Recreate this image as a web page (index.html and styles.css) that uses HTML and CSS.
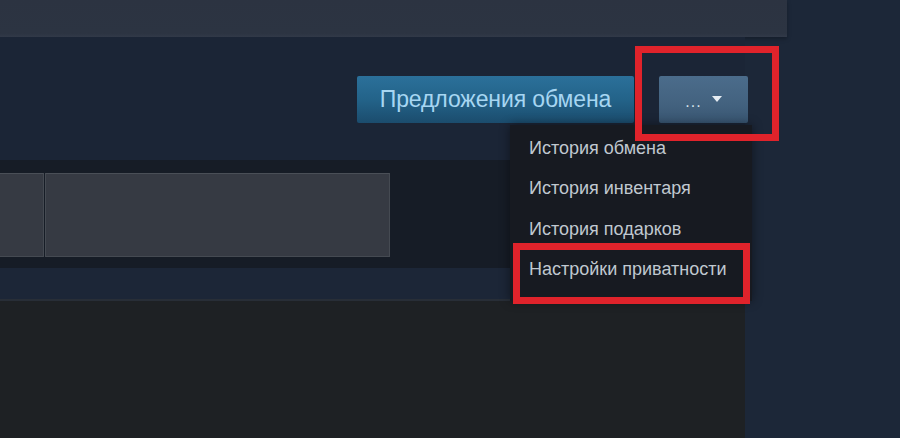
FILE: index.html
```html
<!DOCTYPE html>
<html lang="ru">
<head>
    <meta charset="UTF-8">
    <meta name="viewport" content="width=device-width, initial-scale=1.0">
    <title>Инвентарь</title>
    <link rel="stylesheet" href="styles.css">
</head>
<body>

    <div class="page">
        <div class="main">
            <!-- Top band -->
            <div class="top-band"></div>

            <div class="content">
                <!-- Toolbar with trade buttons -->
                <div class="toolbar">
                    <a class="btn btn-blue" href="#">Предложения обмена</a>
                    <a class="btn btn-grey" href="#">
                        <span class="dots">...</span>
                        <span class="caret"></span>
                    </a>

                    <!-- Dropdown menu -->
                    <div class="menu">
                        <a class="menu-item" href="#">История обмена</a>
                        <a class="menu-item" href="#">История инвентаря</a>
                        <a class="menu-item" href="#">История подарков</a>
                        <a class="menu-item" href="#">Настройки приватности</a>
                    </div>

                    <!-- Red highlights -->
                    <div class="mark mark-more"></div>
                    <div class="mark mark-privacy"></div>
                </div>

                <!-- Game tabs -->
                <div class="tabs-band">
                    <div class="tab tab-cut"></div>
                    <div class="tab tab-wide"></div>
                </div>

                <div class="strip"></div>
                <div class="inventory"></div>
            </div>
        </div>
    </div>

</body>
</html>
```

FILE: styles.css
```css
html, body {
    margin: 0;
    padding: 0;
}

body {
    font-family: "Liberation Sans", Arial, sans-serif;
    background-color: #1c2738;
    height: 438px;
    overflow: hidden;
}

.page {
    display: flex;
    height: 438px;
}

.main {
    width: 787px;
    display: flex;
    flex-direction: column;
}

.top-band {
    height: 37px;
    background: linear-gradient(to bottom, #2c3341 0%, #2c3442 90%, #313948 100%);
    box-shadow: 0 2px 4px rgba(0, 0, 0, 0.25);
}

.content {
    width: 745px;
    flex: 1;
    display: flex;
    flex-direction: column;
    background-color: #1b2536;
}

.toolbar {
    position: relative;
    height: 123px;
    display: flex;
    justify-content: flex-end;
    align-items: flex-start;
    gap: 25px;
    padding-top: 39px;
    margin-right: -3px;
    box-sizing: border-box;
}

.btn {
    height: 47px;
    display: flex;
    align-items: center;
    justify-content: center;
    border-radius: 2px;
    text-decoration: none;
}

.btn-blue {
    width: 277px;
    background: linear-gradient(to bottom, #2b709a 0%, #236389 50%, #1b4c6d 100%);
    color: #a7d6f2;
    font-size: 23px;
    letter-spacing: -0.1px;
}

.btn-grey {
    width: 89px;
    gap: 10px;
    background: linear-gradient(to bottom, #4b6c8b 0%, #43627f 60%, #385571 100%);
    color: #d6e2ec;
    font-size: 16px;
}

.dots {
    padding-top: 4px;
    letter-spacing: 1px;
}

.caret {
    width: 0;
    height: 0;
    border-left: 5px solid transparent;
    border-right: 5px solid transparent;
    border-top: 6px solid #e6edf3;
    margin-top: -2px;
}

.menu {
    position: absolute;
    left: 510px;
    top: 88px;
    width: 242px;
    height: 176px;
    background-color: #171a21;
    box-shadow: 0 0 10px rgba(0, 0, 0, 0.45);
    padding-top: 11px;
    box-sizing: border-box;
    z-index: 2;
}

.menu-item {
    display: block;
    height: 40.3px;
    line-height: 24px;
    padding-left: 19px;
    color: #c0c8d0;
    font-size: 18px;
    text-decoration: none;
}

.mark {
    position: absolute;
    border: 7px solid #e0232b;
    box-sizing: border-box;
    z-index: 3;
}

.mark-more {
    left: 635px;
    top: 9px;
    width: 144px;
    height: 95px;
}

.mark-privacy {
    left: 513px;
    top: 206px;
    width: 237px;
    height: 61px;
}

.tabs-band {
    height: 108px;
    background-color: #161c26;
    display: flex;
    gap: 1px;
    padding-top: 13px;
    box-sizing: border-box;
}

.tab {
    height: 84px;
    background-color: #363a43;
    border: 1px solid #454a52;
    border-top-color: #4a4f57;
    box-sizing: border-box;
}

.tab-cut {
    width: 45px;
    margin-left: -1px;
}

.tab-wide {
    width: 345px;
}

.strip {
    height: 31px;
    background-color: #1c2637;
    border-bottom: 2px solid #282e37;
}

.inventory {
    flex: 1;
    background-color: #1e2124;
}
```
